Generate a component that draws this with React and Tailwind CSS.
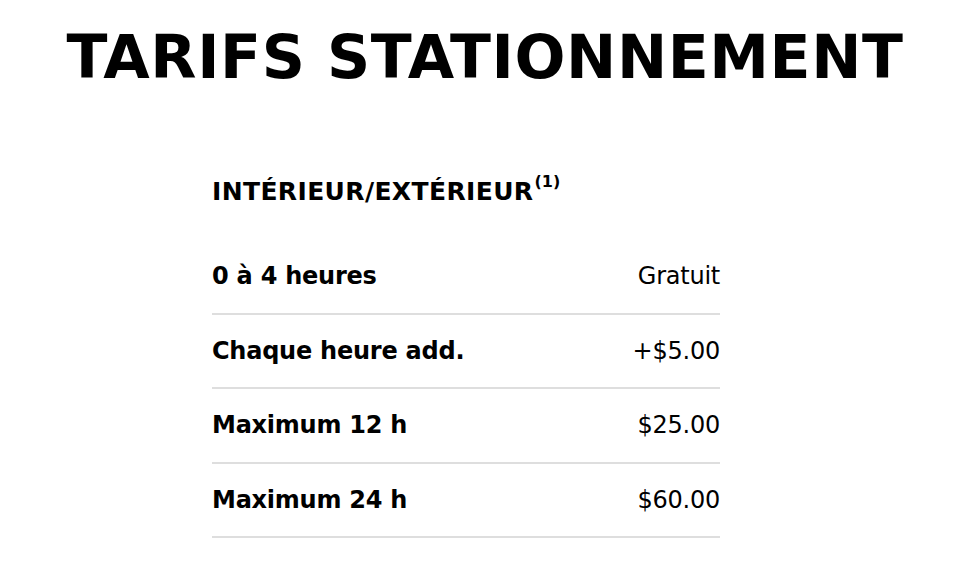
import React from "react";

const rates = [
  { label: "0 à 4 heures", price: "Gratuit" },
  { label: "Chaque heure add.", price: "+$5.00" },
  { label: "Maximum 12 h", price: "$25.00" },
  { label: "Maximum 24 h", price: "$60.00" },
];

export default function App() {
  return (
    <div className="min-h-screen bg-white text-black font-['DejaVu_Sans','Liberation_Sans',sans-serif]">
      {/* Title */}
      <h1 className="pt-[26px] pr-[10px] text-center text-[60px] font-bold leading-[62px] tracking-[0.01em]">
        TARIFS STATIONNEMENT
      </h1>

      {/* Rates table */}
      <section className="ml-[212px] mt-[89px] w-[508px]">
        <h2 className="text-[25px] font-bold leading-[30px] tracking-[0.015em]">
          INTÉRIEUR/EXTÉRIEUR
          <sup className="top-[-13px] ml-[1px] text-[16px] font-bold tracking-normal">(1)</sup>
        </h2>

        <ul className="mt-[33px]">
          {rates.map((r) => (
            <li
              key={r.label}
              className="flex h-[74.5px] items-center justify-between border-b-2 border-[#dedede]"
            >
              <span className="text-[24px] font-bold tracking-[-0.01em]">{r.label}</span>
              <span className="text-[24px] font-normal tracking-[-0.01em]">{r.price}</span>
            </li>
          ))}
        </ul>
      </section>
    </div>
  );
}
